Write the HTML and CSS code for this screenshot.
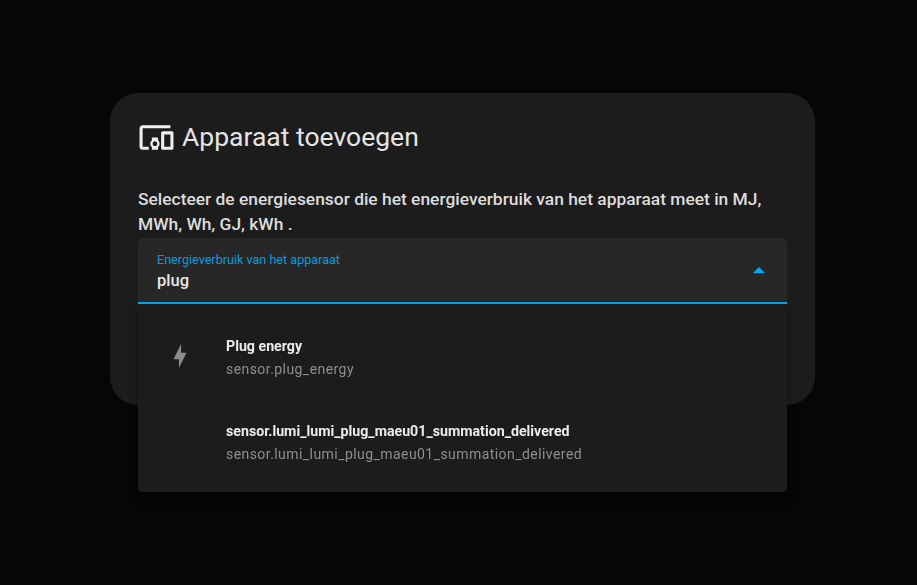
FILE: index.html
```html
<!DOCTYPE html>
<html lang="nl">
<head>
<meta charset="utf-8">
<title>Apparaat toevoegen</title>
<link rel="stylesheet" href="styles.css">
</head>
<body>
<main class="dialog">
  <header class="dialog-header">
    <svg class="dialog-icon" viewBox="0 0 24 24"><path d="M3 6H21V4H3C1.9 4 1 4.9 1 6V18C1 19.1 1.9 20 3 20H7V18H3V6M13 12H9V13.78C8.39 14.33 8 15.11 8 16C8 16.89 8.39 17.67 9 18.22V20H13V18.22C13.61 17.67 14 16.88 14 16S13.61 14.33 13 13.78V12M11 17.5C10.17 17.5 9.5 16.83 9.5 16S10.17 14.5 11 14.5 12.5 15.17 12.5 16 11.83 17.5 11 17.5M22 8H16C15.5 8 15 8.5 15 9V19C15 19.5 15.5 20 16 20H22C22.5 20 23 19.5 23 19V9C23 8.5 22.5 8 22 8M21 18H17V10H21V18Z"/></svg>
    <h1 class="dialog-title">Apparaat toevoegen</h1>
  </header>
  <p class="dialog-text">Selecteer de energiesensor die het energieverbruik van het apparaat meet in MJ, MWh, Wh, GJ, kWh .</p>
  <div class="combo">
    <div class="field">
      <div class="field-content">
        <span class="field-label">Energieverbruik van het apparaat</span>
        <span class="field-value">plug</span>
      </div>
      <span class="field-arrow"></span>
    </div>
    <ul class="menu">
      <li class="menu-item">
        <span class="menu-icon">
          <svg viewBox="0 0 24 24"><path d="M11 15H6L13 1V9H18L11 23V15Z"/></svg>
        </span>
        <div class="menu-text">
          <span class="menu-primary">Plug energy</span>
          <span class="menu-secondary">sensor.plug_energy</span>
        </div>
      </li>
      <li class="menu-item">
        <span class="menu-icon"></span>
        <div class="menu-text">
          <span class="menu-primary">sensor.lumi_lumi_plug_maeu01_summation_delivered</span>
          <span class="menu-secondary">sensor.lumi_lumi_plug_maeu01_summation_delivered</span>
        </div>
      </li>
    </ul>
  </div>
</main>
</body>
</html>
```
FILE: styles.css
```css
* { box-sizing: border-box; }

html, body {
  height: 100%;
  margin: 0;
}

html {
  background: #060606;
}

body {
  font-family: Roboto, "Liberation Sans", sans-serif;
  color: #e1e1e1;
  overflow: hidden;
  padding: 93px 102px 0 110px;
  filter: blur(0.5px);
}

.dialog {
  height: 312px;
  padding: 28px 28px 0;
  background: #1c1c1c;
  border-radius: 28px;
}

.dialog-header {
  display: flex;
  align-items: center;
  gap: 7px;
  height: 32px;
}

.dialog-icon {
  width: 37px;
  height: 37px;
  fill: #f0f0f0;
  flex: none;
}

.dialog-title {
  margin: 0;
  font-size: 26.5px;
  font-weight: 400;
  line-height: 32px;
  color: #e4e4e4;
}

.dialog-text {
  margin: 34px 0 0;
  font-size: 17.4px;
  font-weight: 500;
  line-height: 25px;
  color: #dcdcdc;
}

.combo {
  position: relative;
  margin-top: 1px;
}

.field {
  display: flex;
  align-items: center;
  justify-content: space-between;
  height: 66px;
  padding: 0 22px 0 19px;
  background: #272727;
  border-radius: 4px 4px 0 0;
  border-bottom: 2px solid #03a9f4;
}

.field-content {
  display: flex;
  flex-direction: column;
  padding-top: 3px;
}

.field-label {
  font-size: 12.6px;
  line-height: 18px;
  color: #0a9bdc;
}

.field-value {
  font-size: 16.5px;
  font-weight: 500;
  line-height: 24px;
  color: #e8e8e8;
}

.field-arrow {
  width: 0;
  height: 0;
  border-left: 6px solid transparent;
  border-right: 6px solid transparent;
  border-bottom: 6px solid #03a9f4;
}

.menu {
  position: absolute;
  top: 66px;
  left: 0;
  right: 0;
  margin: 0;
  padding: 0;
  list-style: none;
  height: 188px;
  background: #1c1c1c;
  border-radius: 0 0 4px 4px;
  box-shadow: 0 5px 10px rgba(0, 0, 0, 0.3);
}

.menu-item {
  display: flex;
  align-items: center;
  height: 85px;
  padding-left: 29px;
}

.menu-item:first-child {
  margin-top: 10px;
}

.menu-icon {
  width: 26px;
  height: 26px;
  flex: none;
  margin: -2px 33px 0 0;
}

.menu-icon svg {
  display: block;
  width: 26px;
  height: 26px;
  fill: #8c8c8c;
}

.menu-text {
  display: flex;
  flex-direction: column;
}

.menu-primary {
  font-size: 14.2px;
  font-weight: 700;
  line-height: 24px;
  color: #ececec;
}

.menu-secondary {
  font-size: 14px;
  letter-spacing: 0.44px;
  line-height: 22px;
  color: #8e8e8e;
}
```
